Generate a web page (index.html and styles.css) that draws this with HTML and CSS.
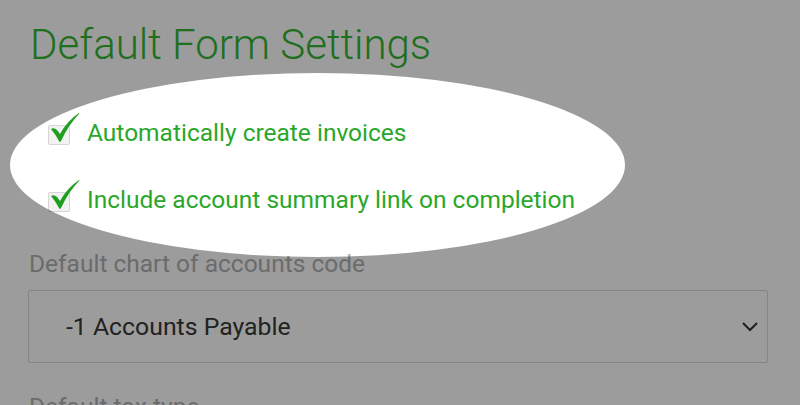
FILE: index.html
```html
<!DOCTYPE html>
<html>
<head>
<title>Default Form Settings</title>
<link rel="stylesheet" href="styles.css">
</head>
<body>

<div class='page'>
    <h1 class='title'>Default Form Settings</h1>

    <div class='checks'>
        <label class='check-row'>
            <span class='box'>
                <svg class='tick' viewBox='0 0 30 32' width='30' height='32'>
                    <path d='M1 17 Q4 15 7 18 L10 22 Q17 9 29 1 Q30 1 29 2 Q19 12 11 29 Q10 31 9 29 Q6 23 1 17 Z' />
                </svg>
            </span>
            <span class='check-text'>Automatically create invoices</span>
        </label>
        <label class='check-row'>
            <span class='box'>
                <svg class='tick' viewBox='0 0 30 32' width='30' height='32'>
                    <path d='M1 17 Q4 15 7 18 L10 22 Q17 9 29 1 Q30 1 29 2 Q19 12 11 29 Q10 31 9 29 Q6 23 1 17 Z' />
                </svg>
            </span>
            <span class='check-text'>Include account summary link on completion</span>
        </label>
    </div>

    <div class='field'>
        <div class='field-label'>Default chart of accounts code</div>
        <div class='select'>
            <span>-1 Accounts Payable</span>
            <svg class='chevron' viewBox='0 0 16 10' width='16' height='10'>
                <path d='M1 1 L8 8 L15 1' />
            </svg>
        </div>
    </div>

    <div class='field'>
        <div class='field-label'>Default tax type</div>
    </div>
</div>

<!-- spotlight over the checkbox block -->
<div class='spotlight'></div>

</body>
</html>
```

FILE: styles.css
```css
html, body {
    margin: 0px;
    height: 100%;
    overflow: hidden;
}

body {
    background: #ffffff;
    font-family: Roboto, "Liberation Sans", sans-serif;
}

.page {
    padding: 0px 32px 0px 28px;
}

.title {
    margin: 0px;
    padding-top: 20px;
    height: 50px;
    font-size: 42px;
    font-weight: 300;
    line-height: 50px;
    color: #33b533;
    padding-left: 2px;
}

.checks {
    display: flex;
    flex-direction: column;
    gap: 34px;
    padding-top: 46px;
    padding-left: 20px;
}

.check-row {
    display: flex;
    align-items: center;
    gap: 17px;
    height: 33px;
}

.box {
    position: relative;
    box-sizing: border-box;
    width: 22px;
    height: 20px;
    margin-top: 4px;
    background: #f2f2f2;
    border: 1px solid #d6d6d6;
    border-radius: 2px;
}

.tick {
    position: absolute;
    left: 1px;
    top: -14px;
}

.tick path {
    fill: #1f9e1f;
}

.check-text {
    font-size: 24.5px;
    color: #2aa72a;
    line-height: 33px;
}

.field {
    padding-top: 34px;
}

.field + .field {
    padding-top: 30px;
}

.field-label {
    font-size: 24.5px;
    color: #b0b0b0;
    line-height: 28px;
    padding-left: 1px;
}

.select {
    display: flex;
    align-items: center;
    justify-content: space-between;
    box-sizing: border-box;
    margin-top: 12px;
    height: 73px;
    border: 1px solid #d9d9d9;
    border-radius: 2px;
    padding: 0px 9px 0px 37px;
    font-size: 24.8px;
    color: #383838;
}

.chevron path {
    fill: none;
    stroke: #333;
    stroke-width: 2;
}

.spotlight {
    position: absolute;
    left: 10px;
    top: 73px;
    width: 615px;
    height: 184px;
    border-radius: 50%;
    box-shadow: 0 0 0 2000px rgba(0, 0, 0, 0.39);
}
```
